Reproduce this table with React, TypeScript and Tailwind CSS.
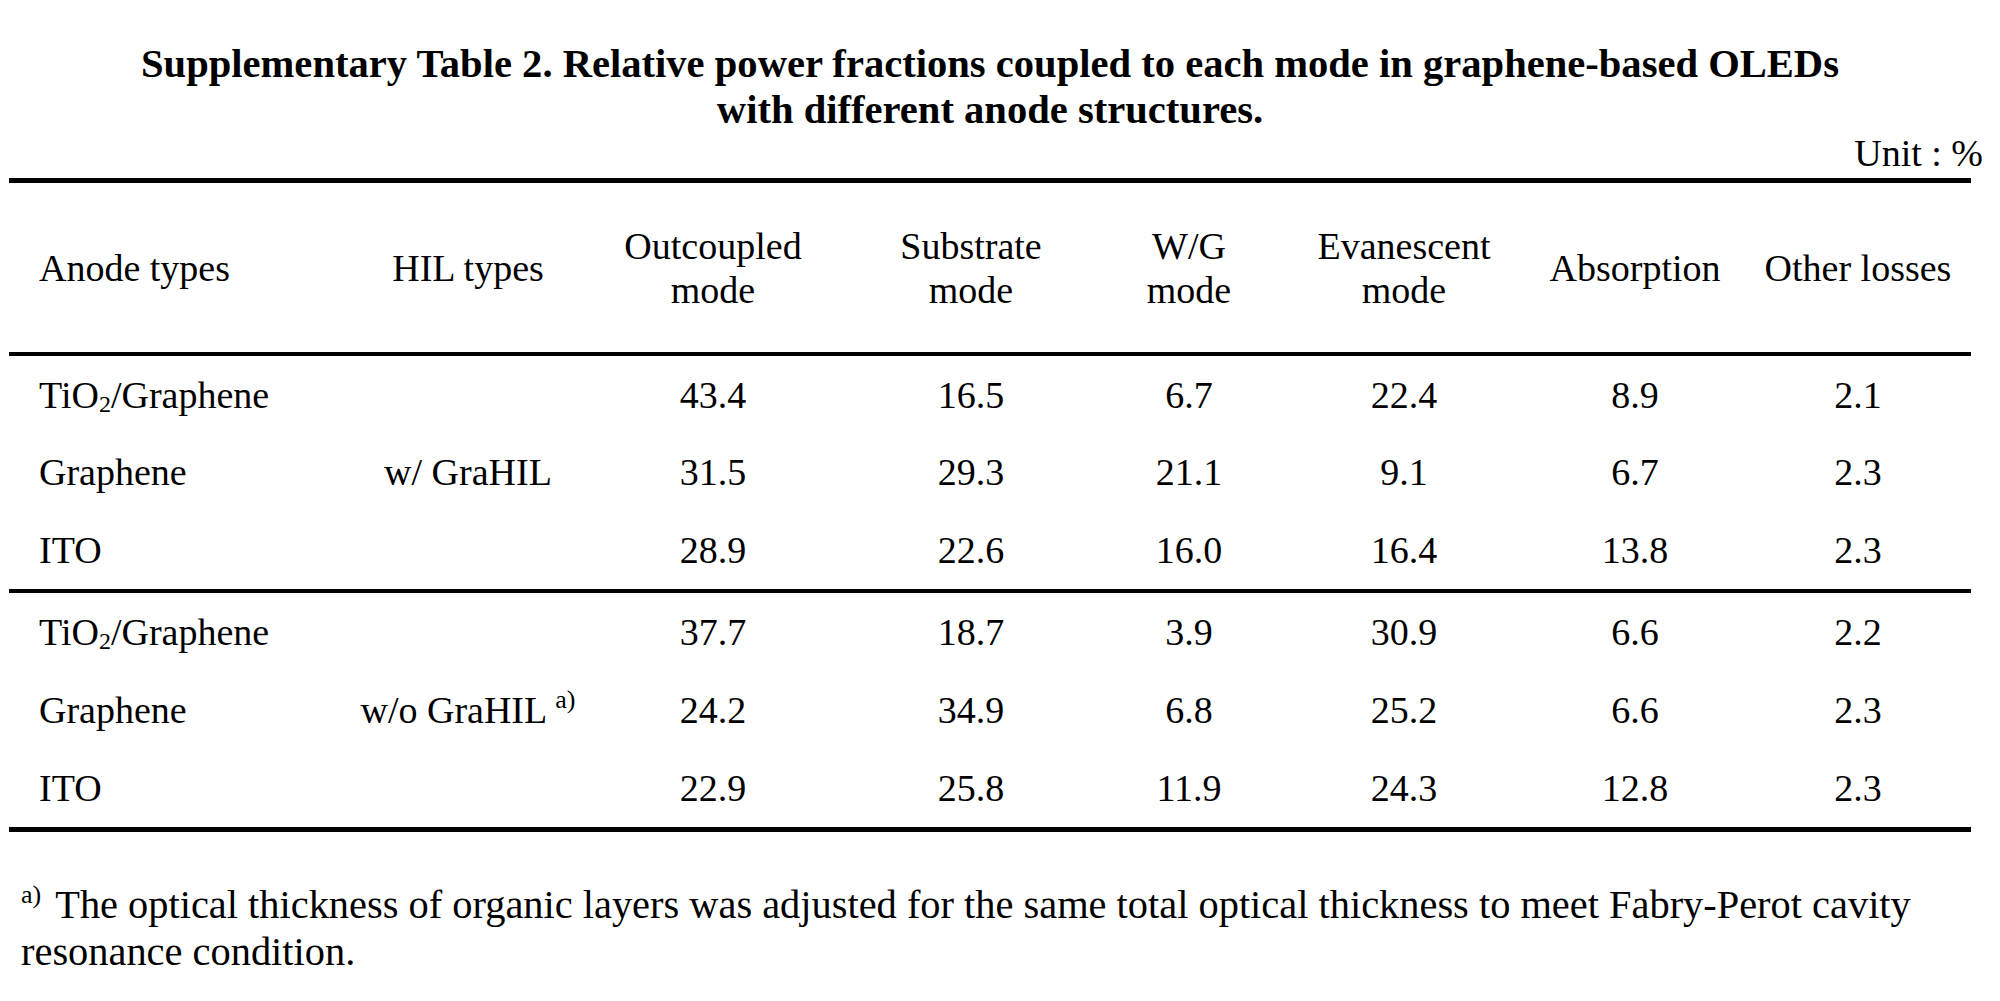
const cols = 'grid grid-cols-[348px_222px_268px_248px_188px_242px_220px_226px]';

const groups = [
  {
    hil: <>w/ GraHIL</>,
    rows: [
      { anode: 'tio2', values: ['43.4', '16.5', '6.7', '22.4', '8.9', '2.1'] },
      { anode: 'Graphene', values: ['31.5', '29.3', '21.1', '9.1', '6.7', '2.3'] },
      { anode: 'ITO', values: ['28.9', '22.6', '16.0', '16.4', '13.8', '2.3'] },
    ],
  },
  {
    hil: (
      <>
        w/o GraHIL{' '}
        <sup className="text-[26px] top-[-15px]">a)</sup>
      </>
    ),
    rows: [
      { anode: 'tio2', values: ['37.7', '18.7', '3.9', '30.9', '6.6', '2.2'] },
      { anode: 'Graphene', values: ['24.2', '34.9', '6.8', '25.2', '6.6', '2.3'] },
      { anode: 'ITO', values: ['22.9', '25.8', '11.9', '24.3', '12.8', '2.3'] },
    ],
  },
];

const Anode = ({ name }: { name: string }) =>
  name === 'tio2' ? (
    <>
      TiO<sub className="text-[24px] bottom-[-4px]">2</sub>/Graphene
    </>
  ) : (
    <>{name}</>
  );

export default function App() {
  return (
    <div className="min-h-screen bg-white text-black font-['Liberation_Serif','Times_New_Roman',serif]">
      <div className="ml-[9px] w-[1962px]">
        {/* title */}
        <h1 className="pt-[41px] text-center text-[40.6px] font-bold leading-[46px]">
          Supplementary Table 2. Relative power fractions coupled to each mode in graphene-based OLEDs
          <br />
          with different anode structures.
        </h1>
        <div className="-mr-[12px] text-right text-[38px] leading-[40px]">Unit : %</div>

        {/* table */}
        <div className="mt-[5px] text-[38px] leading-[44px]">
          <div className="h-[5px] bg-black" />
          <div className={`${cols} h-[169px] items-center`}>
            <div className="pl-[30px]">Anode types</div>
            <div className="text-center">HIL types</div>
            <div className="text-center">
              Outcoupled
              <br />
              mode
            </div>
            <div className="text-center">
              Substrate
              <br />
              mode
            </div>
            <div className="text-center">
              W/G
              <br />
              mode
            </div>
            <div className="text-center">
              Evanescent
              <br />
              mode
            </div>
            <div className="text-center">Absorption</div>
            <div className="text-center">Other losses</div>
          </div>
          <div className="h-[4px] bg-black" />

          {groups.map((g, gi) => (
            <div key={gi}>
              <div className={`${cols} grid-rows-3 ${gi === 0 ? 'h-[233px]' : 'h-[234px]'} items-center`}>
                {g.rows.map((r, ri) => (
                  <div key={ri} className="contents">
                    <div className="pl-[30px] whitespace-nowrap">
                      <Anode name={r.anode} />
                    </div>
                    {ri === 0 && (
                      <div className="row-span-3 self-center text-center whitespace-nowrap">{g.hil}</div>
                    )}
                    {r.values.map((v, vi) => (
                      <div key={vi} className="text-center">
                        {v}
                      </div>
                    ))}
                  </div>
                ))}
              </div>
              <div className={gi === 0 ? 'h-[4px] bg-black' : 'h-[5px] bg-black'} />
            </div>
          ))}
        </div>

        {/* footnote */}
        <p className="mt-[49px] pl-[12px] text-[40.4px] leading-[47px]">
          <sup className="mr-[14px] text-[26px] top-[-15px]">a)</sup>The optical thickness of organic layers was
          adjusted for the same total optical thickness to meet Fabry-Perot cavity resonance condition.
        </p>
      </div>
    </div>
  );
}
